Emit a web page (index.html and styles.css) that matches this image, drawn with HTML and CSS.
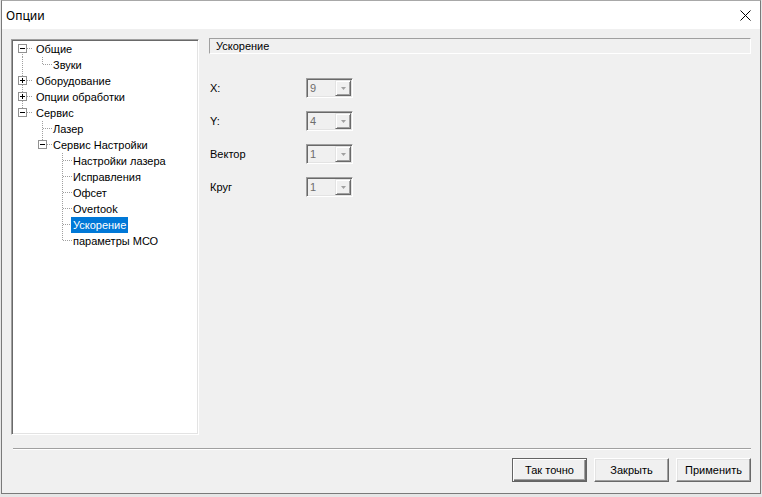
FILE: index.html
```html
<!DOCTYPE html>
<html lang="ru">
<head>
<meta charset="utf-8">
<title>Опции</title>
<link rel="stylesheet" href="styles.css">
</head>
<body>
<div class="window">
  <div class="titlebar">
    <span class="title">Опции</span>
    <svg class="close" width="11" height="11" viewBox="0 0 11 11"><path d="M0.5 0.5L10.5 10.5M10.5 0.5L0.5 10.5" stroke="#000" stroke-width="1" fill="none"/></svg>
  </div>
  <div class="client">
    <div class="main">
      <div class="tree">
        <div class="row"><span class="cell first"><svg class="box" width="9" height="9" viewBox="0 0 9 9"><rect x=".5" y=".5" width="8" height="8" fill="#fff" stroke="#919191"/><path d="M2 4.5h5" stroke="#000"/></svg></span><span class="label root">Общие</span></div>
        <div class="row"><span class="cell pipe"></span><span class="cell elbow"></span><span class="label">Звуки</span></div>
        <div class="row"><span class="cell tee"><svg class="box" width="9" height="9" viewBox="0 0 9 9"><rect x=".5" y=".5" width="8" height="8" fill="#fff" stroke="#919191"/><path d="M2 4.5h5M4.5 2v5" stroke="#000"/></svg></span><span class="label root">Оборудование</span></div>
        <div class="row"><span class="cell tee"><svg class="box" width="9" height="9" viewBox="0 0 9 9"><rect x=".5" y=".5" width="8" height="8" fill="#fff" stroke="#919191"/><path d="M2 4.5h5M4.5 2v5" stroke="#000"/></svg></span><span class="label root">Опции обработки</span></div>
        <div class="row"><span class="cell elbow"><svg class="box" width="9" height="9" viewBox="0 0 9 9"><rect x=".5" y=".5" width="8" height="8" fill="#fff" stroke="#919191"/><path d="M2 4.5h5" stroke="#000"/></svg></span><span class="label root">Сервис</span></div>
        <div class="row"><span class="cell"></span><span class="cell tee"></span><span class="label">Лазер</span></div>
        <div class="row"><span class="cell"></span><span class="cell elbow"><svg class="box" width="9" height="9" viewBox="0 0 9 9"><rect x=".5" y=".5" width="8" height="8" fill="#fff" stroke="#919191"/><path d="M2 4.5h5" stroke="#000"/></svg></span><span class="label">Сервис Настройки</span></div>
        <div class="row"><span class="cell"></span><span class="cell"></span><span class="cell tee"></span><span class="label">Настройки лазера</span></div>
        <div class="row"><span class="cell"></span><span class="cell"></span><span class="cell tee"></span><span class="label">Исправления</span></div>
        <div class="row"><span class="cell"></span><span class="cell"></span><span class="cell tee"></span><span class="label">Офсет</span></div>
        <div class="row"><span class="cell"></span><span class="cell"></span><span class="cell tee"></span><span class="label">Overtook</span></div>
        <div class="row"><span class="cell"></span><span class="cell"></span><span class="cell tee"></span><span class="label selected">Ускорение</span></div>
        <div class="row"><span class="cell"></span><span class="cell"></span><span class="cell elbow"></span><span class="label">параметры МСО</span></div>
      </div>
      <div class="panel">
        <div class="panel-header">Ускорение</div>
        <div class="form">
          <div class="field"><span class="flabel">X:</span><div class="combo"><span class="cval">9</span><span class="cbtn"><svg width="5" height="3" viewBox="0 0 5 3"><path d="M0 0h5L2.5 3z" fill="#a0a0a0"/></svg></span></div></div>
          <div class="field"><span class="flabel">Y:</span><div class="combo"><span class="cval">4</span><span class="cbtn"><svg width="5" height="3" viewBox="0 0 5 3"><path d="M0 0h5L2.5 3z" fill="#a0a0a0"/></svg></span></div></div>
          <div class="field"><span class="flabel">Вектор</span><div class="combo"><span class="cval">1</span><span class="cbtn"><svg width="5" height="3" viewBox="0 0 5 3"><path d="M0 0h5L2.5 3z" fill="#a0a0a0"/></svg></span></div></div>
          <div class="field"><span class="flabel">Круг</span><div class="combo"><span class="cval">1</span><span class="cbtn"><svg width="5" height="3" viewBox="0 0 5 3"><path d="M0 0h5L2.5 3z" fill="#a0a0a0"/></svg></span></div></div>
        </div>
      </div>
    </div>
    <div class="sep"></div>
    <div class="buttons">
      <button class="btn default">Так точно</button>
      <button class="btn">Закрыть</button>
      <button class="btn">Применить</button>
    </div>
  </div>
</div>
</body>
</html>
```

FILE: styles.css
```css
html, body {
  margin: 0;
  padding: 0;
}
body {
  background: #e6e6e6;
  font-family: "Liberation Sans", Arial, sans-serif;
  font-size: 11px;
  color: #000;
}
.window {
  box-sizing: border-box;
  width: 760px;
  height: 494px;
  margin-left: 1px;
  border: 1px solid #7a7a7a;
  border-top-color: #a8a8a8;
  display: flex;
  flex-direction: column;
  background: #f0f0f0;
}
.titlebar {
  height: 28px;
  flex: 0 0 28px;
  background: #fff;
  display: flex;
  align-items: center;
  justify-content: space-between;
  padding: 0 9px 0 4px;
}
.title {
  font-family: "Noto Sans", "Open Sans", sans-serif;
  font-size: 12px;
  color: #000;
}
.close {
  display: block;
  margin-top: 1px;
}
.client {
  flex: 1;
  padding: 10px 9px 0 9px;
  display: flex;
  flex-direction: column;
}
.main {
  display: flex;
  gap: 10px;
  height: 396px;
}
.tree {
  box-sizing: border-box;
  width: 188px;
  height: 396px;
  background: #fff;
  border: 1px solid;
  border-color: #a0a0a0 #fff #fff #a0a0a0;
  box-shadow: inset 1px 1px #696969, inset -1px -1px #e3e3e3;
  padding: 1px 0 0 1px;
}
.row {
  display: flex;
  height: 16px;
  align-items: flex-start;
  --v: repeating-linear-gradient(to bottom, #a0a0a0 0 1px, transparent 1px 2px);
  --h: repeating-linear-gradient(to right, #a0a0a0 0 1px, transparent 1px 2px);
}
.cell {
  flex: 0 0 20px;
  width: 20px;
  height: 16px;
  display: flex;
  align-items: flex-start;
}
.box {
  display: block;
  margin: 3px 0 0 5px;
}
.pipe {
  background: var(--v) 9px 0 / 1px 16px no-repeat;
}
.tee {
  background: var(--v) 9px 0 / 1px 16px no-repeat, var(--h) 10px 7px / 9px 1px no-repeat;
}
.elbow {
  background: var(--v) 9px 0 / 1px 8px no-repeat, var(--h) 10px 7px / 9px 1px no-repeat;
}
.first {
  background: var(--v) 9px 7px / 1px 9px no-repeat, var(--h) 10px 7px / 9px 1px no-repeat;
}
.label {
  line-height: 16px;
  height: 16px;
  padding: 0 2px;
  margin-left: -2px;
  white-space: nowrap;
}
.label.root {
  margin-left: 1px;
}
.label.selected {
  background: #0078d7;
  color: #fff;
}
.panel {
  flex: 1;
  display: flex;
  flex-direction: column;
}
.panel-header {
  box-sizing: border-box;
  height: 16px;
  margin-top: -1px;
  border: 1px solid;
  border-color: #a0a0a0 #fff #fff #a0a0a0;
  padding-left: 6px;
  line-height: 14px;
}
.form {
  display: flex;
  flex-direction: column;
  gap: 13px;
  padding: 24px 0 0 1px;
}
.field {
  display: flex;
  align-items: center;
  height: 20px;
}
.flabel {
  width: 96px;
}
.combo {
  box-sizing: border-box;
  width: 47px;
  height: 20px;
  border: 1px solid;
  border-color: #a0a0a0 #fff #fff #a0a0a0;
  box-shadow: inset 1px 1px #696969, inset -1px -1px #e3e3e3;
  padding: 1px;
  display: flex;
  justify-content: space-between;
  background: #f0f0f0;
}
.cval {
  color: #6d6d6d;
  padding-left: 2px;
  line-height: 16px;
}
.cbtn {
  box-sizing: border-box;
  width: 16px;
  height: 16px;
  border: 1px solid;
  border-color: #e3e3e3 #696969 #696969 #e3e3e3;
  box-shadow: inset 1px 1px #fff, inset -1px -1px #a0a0a0;
  background: #f0f0f0;
  display: flex;
  align-items: center;
  justify-content: center;
}
.cbtn svg {
  display: block;
}
.sep {
  margin: 13px 0 0 2px;
  height: 1px;
  background: #a0a0a0;
  border-bottom: 1px solid #fff;
}
.buttons {
  display: flex;
  justify-content: flex-end;
  gap: 7px;
  padding: 8px 0 0 0;
}
.btn {
  box-sizing: border-box;
  width: 75px;
  height: 24px;
  margin: 0;
  padding: 0;
  font-family: "Liberation Sans", Arial, sans-serif;
  font-size: 11px;
  color: #000;
  background: #f0f0f0;
  border: 1px solid;
  border-color: #fff #696969 #696969 #fff;
  box-shadow: inset -1px -1px #a0a0a0, inset 1px 1px #e3e3e3;
}
.btn.default {
  border-color: #646464;
  box-shadow: inset 1px 1px #fff, inset -1px -1px #696969, inset -2px -2px #a0a0a0;
}
```
